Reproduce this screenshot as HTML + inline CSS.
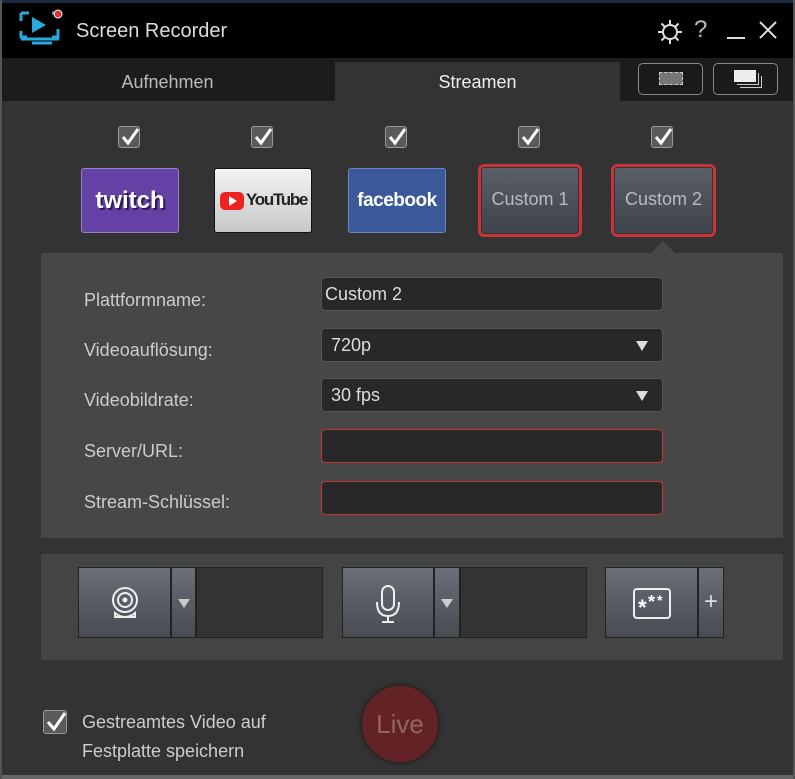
<!DOCTYPE html><html><head><meta charset="utf-8"><style>
*{box-sizing:border-box;margin:0;padding:0}
body{width:795px;height:779px;background:#333;font-family:"Liberation Sans",sans-serif;position:relative;overflow:hidden;color:#ddd}
.a{position:absolute}
.cb{position:absolute;width:22px;height:22px;border:1px solid #999;border-radius:3px;background:#5a5a5a;}
.cb svg{position:absolute;left:1px;top:0}
.btn{position:absolute;border-radius:3px;border:1px solid #111;}
.cust{position:absolute;border:3px solid #c8333a;border-radius:6px;padding:1px;}
.cust div{width:100%;height:100%;background:linear-gradient(#5a5f68,#3f434a);border-radius:2px;color:#bbb;font-size:18px;text-align:center;line-height:63px}
.lab{position:absolute;left:84px;font-size:18px;color:#ccc}
.inp{position:absolute;left:321px;width:342px;height:34px;background:#282828;border:1px solid #555;border-radius:4px;font-size:18px;color:#ddd;padding-left:9px;line-height:32px}
.red{border-color:#c8333a}
.tri{position:absolute;right:14px;top:12px;width:0;height:0;border-left:6px solid transparent;border-right:6px solid transparent;border-top:10px solid #ddd}
.gb{position:absolute;background:linear-gradient(#6a6f78,#474b52);border:1px solid #222}
.dk{position:absolute;background:#333;border:1px solid #222}
</style></head><body>
<div class="a" style="left:0;top:0;width:795px;height:58px;background:#000;border-top:3px solid #1a2a44"></div>
<svg class="a" style="left:18px;top:9px" width="48" height="42" viewBox="0 0 48 42"><path d="M3 4h8M3 4v8M3 22v6h6M37 4h-3M40 20v8h-6M14 34h20" stroke="#29a8e0" stroke-width="3" fill="none"/><path d="M3 30h38" stroke="#29a8e0" stroke-width="3"/><path d="M14 8l14 8-14 8z" fill="#29a8e0"/><circle cx="40" cy="5" r="4" fill="#d33" stroke="#fff" stroke-width="1"/></svg>
<div class="a" style="left:76px;top:20px;font-size:20px;color:#ddd">Screen Recorder</div>
<svg class="a" style="left:656px;top:18px" width="28" height="28" viewBox="0 0 28 28"><circle cx="14" cy="14" r="7" fill="none" stroke="#ddd" stroke-width="2"/><path d="M14 2v5M14 21v5M2 14h5M21 14h5M5.5 5.5l3.5 3.5M19 19l3.5 3.5M5.5 22.5L9 19M19 9l3.5-3.5" stroke="#ddd" stroke-width="2"/></svg>
<div class="a" style="left:694px;top:16px;font-size:24px;color:#bbb">?</div>
<div class="a" style="left:727px;top:37px;width:18px;height:2px;background:#ddd"></div>
<svg class="a" style="left:759px;top:21px" width="18" height="18"><path d="M1 1L17 17M17 1L1 17" stroke="#ddd" stroke-width="2"/></svg>
<div class="a" style="left:0;top:58px;width:795px;height:43px;background:#1c1c1c"></div>
<div class="a" style="left:335px;top:62px;width:285px;height:39px;background:#333"></div>
<div class="a" style="left:0;top:72px;width:335px;text-align:center;font-size:18px;color:#bbb">Aufnehmen</div>
<div class="a" style="left:335px;top:72px;width:285px;text-align:center;font-size:18px;color:#eee">Streamen</div>
<div class="a" style="left:638px;top:63px;width:65px;height:32px;border:1.5px solid #888;border-radius:5px;background:#1a1a1a"></div>
<div class="a" style="left:659px;top:72px;width:24px;height:13px;border:1.5px dashed #ccc;background:#777"></div>
<div class="a" style="left:713px;top:63px;width:65px;height:32px;border:1.5px solid #888;border-radius:5px;background:#1a1a1a"></div>
<div class="a" style="left:734px;top:70px;width:22px;height:12px;background:#eee;box-shadow:2px 2px 0 #1a1a1a,3px 3px 0 #ccc,5px 5px 0 #1a1a1a,6px 6px 0 #ccc"></div>
<div class="cb" style="left:118px;top:126px"><svg width="20" height="20"><path d="M3 10l5 6L18 2" stroke="#fff" stroke-width="3" fill="none"/></svg></div>
<div class="cb" style="left:251px;top:126px"><svg width="20" height="20"><path d="M3 10l5 6L18 2" stroke="#fff" stroke-width="3" fill="none"/></svg></div>
<div class="cb" style="left:385px;top:126px"><svg width="20" height="20"><path d="M3 10l5 6L18 2" stroke="#fff" stroke-width="3" fill="none"/></svg></div>
<div class="cb" style="left:518px;top:126px"><svg width="20" height="20"><path d="M3 10l5 6L18 2" stroke="#fff" stroke-width="3" fill="none"/></svg></div>
<div class="cb" style="left:651px;top:126px"><svg width="20" height="20"><path d="M3 10l5 6L18 2" stroke="#fff" stroke-width="3" fill="none"/></svg></div>
<div class="btn" style="left:81px;top:168px;width:98px;height:65px;background:#6441a4;border-color:#9a80cc;text-align:center;line-height:63px;font-size:24px;font-weight:bold;color:#fff;text-shadow:2px 2px 0 #2c1a55">twitch</div>
<div class="btn" style="left:214px;top:168px;width:98px;height:65px;background:linear-gradient(#f2f2f2,#c8c8c8)"><div class="a" style="left:5px;top:23px;width:24px;height:18px;background:#e22;border-radius:5px"></div><div class="a" style="left:14px;top:27px;border-left:8px solid #fff;border-top:5px solid transparent;border-bottom:5px solid transparent"></div><div class="a" style="left:31px;top:21px;font-size:17px;font-weight:bold;color:#222;letter-spacing:-1.3px">YouTube</div></div>
<div class="btn" style="left:348px;top:168px;width:98px;height:65px;background:#3b5998;border-color:#6a86c0;text-align:center;line-height:63px;font-size:19px;font-weight:bold;color:#fff;letter-spacing:-.5px">facebook</div>
<div class="cust" style="left:478px;top:164px;width:104px;height:73px"><div>Custom 1</div></div>
<div class="cust" style="left:611px;top:164px;width:105px;height:73px"><div>Custom 2</div></div>
<div class="a" style="left:41px;top:253px;width:742px;height:285px;background:#474747"></div>
<div class="a" style="left:651px;top:241px;border-left:12px solid transparent;border-right:12px solid transparent;border-bottom:12px solid #474747"></div>
<div class="lab" style="top:290px">Plattformname:</div>
<div class="lab" style="top:340px">Videoauflösung:</div>
<div class="lab" style="top:390px">Videobildrate:</div>
<div class="lab" style="top:441px">Server/URL:</div>
<div class="lab" style="top:492px">Stream-Schlüssel:</div>
<div class="inp" style="top:277px;padding-left:3px">Custom 2</div>
<div class="inp" style="top:328px">720p<div class="tri"></div></div>
<div class="inp" style="top:378px">30 fps<div class="tri"></div></div>
<div class="inp red" style="top:429px"></div>
<div class="inp red" style="top:481px"></div>
<div class="a" style="left:41px;top:554px;width:742px;height:106px;background:#444"></div>
<div class="gb" style="left:78px;top:567px;width:93px;height:71px"></div>
<div class="gb" style="left:171px;top:567px;width:25px;height:71px"><div class="a" style="left:6px;top:31px;border-left:6px solid transparent;border-right:6px solid transparent;border-top:9px solid #ccc"></div></div>
<div class="dk" style="left:196px;top:567px;width:127px;height:71px"></div>
<svg class="a" style="left:108px;top:583px" width="34" height="40"><circle cx="17" cy="17" r="12" fill="none" stroke="#eee" stroke-width="2"/><circle cx="17" cy="17" r="7" fill="none" stroke="#eee" stroke-width="2"/><circle cx="17" cy="17" r="2.5" fill="#eee"/><path d="M7 30q10 8 20 0v4H7z" fill="none" stroke="#eee" stroke-width="2"/></svg>
<div class="gb" style="left:342px;top:567px;width:92px;height:71px"></div>
<div class="gb" style="left:434px;top:567px;width:26px;height:71px"><div class="a" style="left:6px;top:31px;border-left:6px solid transparent;border-right:6px solid transparent;border-top:9px solid #ccc"></div></div>
<div class="dk" style="left:460px;top:567px;width:127px;height:71px"></div>
<svg class="a" style="left:374px;top:585px" width="28" height="40"><rect x="8" y="1" width="12" height="24" rx="6" fill="none" stroke="#eee" stroke-width="2"/><path d="M3 17q0 14 11 14t11-14M14 31v6M8 37h12" fill="none" stroke="#eee" stroke-width="2"/></svg>
<div class="gb" style="left:605px;top:567px;width:93px;height:71px"></div>
<div class="gb" style="left:698px;top:567px;width:26px;height:71px;color:#ddd;font-size:24px;text-align:center;line-height:68px">+</div>
<svg class="a" style="left:633px;top:588px" width="40" height="32"><rect x="1" y="1" width="36" height="29" rx="3" fill="none" stroke="#eee" stroke-width="2"/><text x="5" y="27" font-size="22" fill="#fff" font-weight="bold" font-family="Liberation Sans">*</text><text x="15" y="20" font-size="18" fill="#fff" font-weight="bold" font-family="Liberation Sans">*</text><text x="24" y="17" font-size="14" fill="#fff" font-weight="bold" font-family="Liberation Sans">*</text></svg>
<div class="cb" style="left:43px;top:710px;width:24px;height:24px"><svg width="22" height="22"><path d="M3 11l6 7L20 2" stroke="#fff" stroke-width="3" fill="none"/></svg></div>
<div class="a" style="left:82px;top:708px;font-size:18px;color:#ccc;line-height:29px">Gestreamtes Video auf<br>Festplatte speichern</div>
<div class="a" style="left:362px;top:686px;width:76px;height:76px;border-radius:50%;background:#632326;box-shadow:0 0 3px 2px #2a2222;text-align:center;line-height:76px;font-size:26px;color:#946464">Live</div>
<div class="a" style="left:0;top:775px;width:795px;height:4px;background:#666"></div>
<div class="a" style="left:0;top:0;width:2px;height:779px;background:#555"></div>
<div class="a" style="left:793px;top:0;width:2px;height:779px;background:#555"></div>
</body></html>
